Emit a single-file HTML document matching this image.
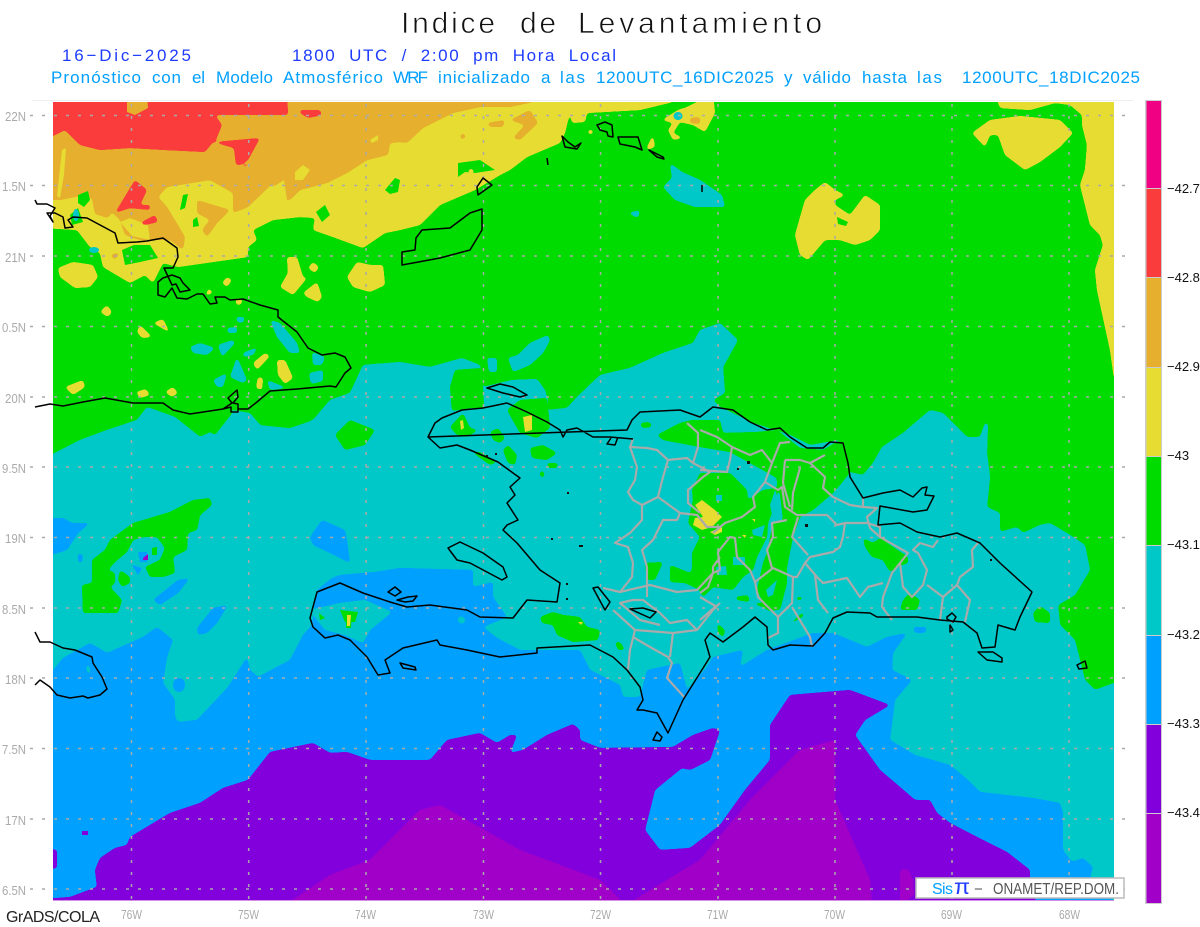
<!DOCTYPE html>
<html><head><meta charset="utf-8"><title>Indice de Levantamiento</title>
<style>html,body{margin:0;padding:0;background:#fff;width:1200px;height:927px;overflow:hidden}svg{display:block}text{font-family:"Liberation Sans",sans-serif}</style></head>
<body>
<svg width="1200" height="927" viewBox="0 0 1200 927" xmlns="http://www.w3.org/2000/svg">
<defs>
<filter id="g" x="-2%" y="-2%" width="104%" height="104%" color-interpolation-filters="sRGB">
<feGaussianBlur stdDeviation="1.6"/>
<feColorMatrix type="matrix" values="1 0 0 0 0 0 1 0 0 0 0 0 1 0 0 0 0 0 16 -7"/>
</filter>
<clipPath id="m"><rect x="53" y="102" width="1061" height="799"/></clipPath>
</defs>
<rect width="1200" height="927" fill="#fff"/>
<g clip-path="url(#m)">
<rect x="53" y="102" width="1061" height="799" fill="#00dc00"/>

<!-- yellow -->
<g fill="#e6dc32" filter="url(#g)">
<polygon points="45,94 673,94 673,102 640,110 587,113 585,122 572,123 570,112 565,133 560,143 527,157 510,170 500,175 475,190 440,205 420,225 400,230 385,233 363,248 333,237 313,230 315,218 300,217 273,220 253,230 257,240 248,247 248,257 178,267 163,263 153,283 145,275 130,283 103,267 100,253 90,247 77,230 45,228"/>
<polygon points="58,268 73,262 93,265 98,277 90,287 75,288 60,277"/>
<polygon points="287,257 297,257 303,277 307,278 293,295 280,287 288,273"/>
<polygon points="313,262 319,267 315,273 308,268"/>
<polygon points="303,293 317,282 322,297 318,302 307,297"/>
<polygon points="347,277 357,262 370,265 383,265 385,285 370,292 353,287"/>
<polygon points="107,305 112,312 108,317 100,312"/>
<polygon points="140,325 152,337 142,338 137,332"/>
<polygon points="153,323 163,319 170,333 162,328"/>
<polygon points="227,277 232,280 227,287 222,283"/>
<polygon points="209,288 213,293 205,296"/>
<polygon points="239,297 243,302 238,306 235,301"/>
<polygon points="65,387 83,380 85,387 73,395"/>
<polygon points="165,392 173,387 178,393 172,397"/>
<polygon points="136,392 146,389 150,395 140,398"/>
<polygon points="253,363 265,353 270,356 257,370"/>
<polygon points="277,360 285,360 293,378 285,384 278,375"/>
<polygon points="258,377 263,378 262,390 256,388"/>
<polygon points="972,133 990,120 1020,116 1060,120 1073,133 1060,147 1040,162 1025,170 1005,155 998,135 990,135 985,147"/>
<polygon points="825,182 835,190 845,195 835,200 835,205 850,215 865,195 880,205 880,230 870,240 855,245 840,240 825,240 808,260 800,255 795,235 805,200 815,190"/>
<polygon points="995,94 1000,108 1030,110 1055,103 1070,105 1082,115 1082,125 1087,145 1085,170 1080,185 1085,205 1090,225 1100,235 1103,245 1095,270 1097,290 1110,350 1114,378 1122,378 1122,94"/>
<polygon points="670,115 678,110 687,107 713,94 715,113 705,132 693,125 680,122 673,133 683,138 673,140 668,130 673,123 662,120"/>
<polygon points="647,147 653,135 655,147 647,150"/>
<polygon points="588,130 593,130 593,134 588,134"/>
</g>
<polygon points="837,217 848,222 846,226 838,224" fill="#00dc00"/>
<polygon points="458,163 480,160 495,170 475,173 465,172 458,177" fill="#00dc00"/>
<ellipse cx="471" cy="172" rx="2.500" ry="3" fill="#e6dc32"/>
<polygon points="673,94 690,94 685,108 675,107" fill="#00dc00"/>
<ellipse cx="678" cy="116" rx="4.500" ry="4" fill="#00c8c8"/>

<!-- orange -->
<g fill="#e6af2d" filter="url(#g)">
<polygon points="45,94 533,94 533,102 510,107 480,107 453,113 423,128 407,143 400,142 390,143 388,155 367,160 347,173 327,183 300,190 290,200 280,200 273,183 248,207 233,213 233,193 210,180 167,187 158,197 167,207 185,237 183,250 170,240 140,240 125,235 120,220 110,210 95,200 85,195 60,200 45,200"/>
<polygon points="197,200 230,210 217,223 207,237 202,230 210,220 197,213"/>
<polygon points="92,198 117,205 108,218 95,214"/>
<polygon points="487,123 505,120 503,127 490,127"/>
<polygon points="510,120 530,110 538,123 520,140 513,138 525,125"/>
<polygon points="690,118 700,117 700,124 690,123"/>
<polygon points="110,255 120,252 115,260"/>
<polygon points="460,135 465,133 465,139 461,139"/>
</g>
<g fill="#e6dc32">
<polygon points="62,150 66,148 64,175 60,198 57,196"/>
<polygon points="295,172 303,165 310,170 303,180 295,180"/>
<polygon points="370,140 378,135 378,140 372,143"/>
<polygon points="273,187 284,180 287,200 280,202"/>
<polygon points="120,222 130,218 148,225 150,240 132,236"/>
</g>

<!-- red -->
<g fill="#fa3c3c" filter="url(#g)">
<polygon points="45,94 287,94 288,115 215,115 222,125 215,142 260,138 248,160 240,165 236,165 234,148 213,142 205,152 165,150 130,148 100,150 80,145 65,130 45,140"/>
<polygon points="300,110 320,110 322,115 308,118 300,113"/>
<polygon points="243,165 255,162 243,168"/>
<polygon points="115,213 135,180 147,190 140,205 150,205 150,210 130,208"/>
<polygon points="140,223 155,215 158,222 145,225"/>
</g>
<polygon points="127,94 147,94 148,108 135,115 127,112" fill="#e6af2d"/>

<!-- green spots in upper-left -->
<g fill="#00dc00">
<polygon points="78,195 88,191 90,200 84,207 78,203"/>
<polygon points="70,215 78,208 83,222 72,225"/>
<polygon points="183,195 188,194 185,208 180,210"/>
<polygon points="193,220 197,217 199,226 193,227"/>
<polygon points="385,190 395,178 400,180 398,192 390,194"/>
<polygon points="316,212 325,205 330,215 322,222"/>
<polygon points="122,250 134,245 150,245 158,258 140,262 125,265"/>
</g>
<ellipse cx="94" cy="250" rx="5" ry="3" fill="#00c8c8"/>
<ellipse cx="76" cy="215" rx="3" ry="6" fill="#00c8c8"/>

<!-- teal -->
<g fill="#00c8c8" filter="url(#g)">
<polygon points="45,458 80,440 107,430 137,420 147,407 175,417 200,437 215,430 232,410 250,413 260,425 290,425 313,420 330,400 350,393 363,365 400,362 430,367 462,358 480,365 483,387 512,380 537,379 545,390 548,400 547,410 567,408 577,397 600,375 630,368 663,353 693,343 700,330 720,323 738,340 723,367 725,393 713,400 720,407 743,418 750,422 790,435 810,445 840,440 849,472 863,475 873,463 882,447 903,433 930,410 943,413 967,437 980,437 985,423 988,423 987,453 990,477 987,507 1000,513 1000,532 1017,527 1023,533 1040,525 1050,523 1070,535 1085,545 1090,570 1075,595 1058,605 1060,625 1075,640 1085,680 1095,690 1122,680 1122,909 45,909"/>
<polygon points="487,358 497,358 497,372 489,372"/>
<polygon points="508,358 518,355 530,343 548,335 550,340 543,353 530,365 513,372"/>
<polygon points="190,347 200,343 215,348 207,355 193,353"/>
<polygon points="218,345 233,340 235,343 222,357"/>
<polygon points="227,328 237,327 237,333 228,333"/>
<polygon points="236,317 245,317 243,323 237,322"/>
<polygon points="270,320 280,323 297,343 300,353 290,353 277,337"/>
<polygon points="230,377 237,357 247,380 243,383"/>
<polygon points="213,380 227,373 223,387 217,387"/>
<polygon points="243,353 258,347 253,355 243,357"/>
<polygon points="312,352 325,357 322,365 313,365"/>
<polygon points="309,373 323,370 323,381 311,384"/>
<polygon points="267,380 287,388 270,390"/>
<polygon points="670,163 682,172 700,180 722,195 725,207 695,207 675,200 663,187 672,178"/>
<polygon points="628,213 640,210 638,218"/>
</g>

<!-- green over teal -->
<g fill="#00dc00" filter="url(#g)">
<polygon points="253,413 280,405 310,410 313,420 290,428 260,425"/>
<polygon points="335,435 350,420 375,430 365,445 345,450"/>
<polygon points="205,408 225,398 233,412 215,435 198,425"/>
<polygon points="455,370 482,368 484,408 470,408 452,411 450,387"/>
<polygon points="507,410 520,400 547,398 548,408 550,428 537,438 520,433"/>
<polygon points="450,427 463,413 470,428 478,430 467,437 457,435"/>
<polygon points="490,432 498,428 505,438 500,443 493,440"/>
<polygon points="503,450 508,445 517,455 515,465 508,463"/>
<polygon points="530,448 543,445 557,453 547,460 532,458"/>
<polygon points="472,452 480,452 497,462 490,465"/>
<polygon points="547,463 558,463 557,468 548,468"/>
<polygon points="540,472 543,470 545,477 540,477"/>
<polygon points="83,613 82,585 92,583 92,560 105,550 110,540 133,523 150,518 170,512 193,500 210,498 212,505 200,515 197,530 188,533 187,550 177,555 173,557 175,573 163,577 150,577 145,567 160,560 165,548 157,537 143,537 133,540 127,552 115,562 108,570 115,573 115,583 110,587 122,600 118,613"/>
<polygon points="120,570 130,577 130,583 122,587 118,580"/>
<polygon points="1033,613 1040,606 1050,613 1050,623 1035,622"/>
<polygon points="640,423 650,422 652,427 642,428"/>
<polygon points="657,435 680,423 692,420 720,420 723,433 757,432 777,430 800,448 823,450 840,440 852,445 852,470 840,485 833,493 813,510 800,517 793,537 787,567 787,583 780,610 767,610 757,590 763,563 767,553 773,523 783,520 780,493 777,488 777,478 730,452 700,447 663,440"/>
<polygon points="692,490 700,473 730,473 747,490 748,500 763,490 777,488 777,500 768,523 767,537 757,557 753,570 743,577 733,590 713,587 703,597 690,573 692,570 692,553 700,537 688,523 693,500"/>
<polygon points="645,563 663,562 655,580 647,580"/>
<polygon points="670,565 690,573 707,580 700,590 685,583 670,582"/>
<polygon points="863,538 873,543 880,538 893,547 908,557 908,563 897,567 890,572 883,560 872,557 865,547"/>
<polygon points="903,600 910,593 920,600 917,610 900,610"/>
<polygon points="735,597 748,595 750,602 737,600"/>
<polygon points="750,603 770,603 773,613 763,607"/>
<polygon points="795,597 803,597 802,600 797,600"/>
<polygon points="790,623 802,613 805,615 793,623"/>
<polygon points="717,623 725,630 723,638 718,632"/>
<polygon points="540,617 553,612 563,615 580,617 587,627 600,630 598,640 573,642 557,635 553,625 542,623"/>
<polygon points="615,642 620,642 625,650 618,650"/>
</g>
<g fill="#00c8c8">
<polygon points="752,530 765,525 762,537 753,535"/>
<polygon points="733,557 745,557 745,565 733,565"/>
<polygon points="716,567 726,566 727,575 717,575"/>
<polygon points="775,490 781,505 773,520 770,505"/>
<polygon points="766,590 777,580 773,595 768,597"/>
<polygon points="716,495 722,495 722,501 716,501"/>
</g>
<g fill="#00a0ff">
<polygon points="138,552 147,552 147,562 140,562"/>
<polygon points="132,565 142,568 138,575"/>
</g>
<polygon points="143,558 148,554 148,560 143,560" fill="#a000c8"/>
<polygon points="152,548 157,547 157,555 152,555" fill="#00dc00"/>

<!-- yellow over green in DR -->
<g fill="#e6dc32">
<polygon points="695,505 702,500 715,510 722,517 712,527 702,530 693,525 695,518 703,517"/>
<polygon points="710,532 722,527 722,532 715,535"/>
<polygon points="523,417 532,415 532,430 525,432"/>
<polygon points="460,421 463,420 464,428 461,430"/>
<polygon points="578,622 583,622 581,625"/>
<polygon points="752,519 755,519 755,522"/>
<polygon points="742,535 746,535 745,538"/>
</g>

<!-- blue -->
<g filter="url(#g)" fill="#00a0ff">
<polygon points="45,680 63,658 90,643 107,653 143,637 157,627 173,640 167,657 163,683 175,700 175,717 178,722 197,720 228,687 247,657 250,670 258,677 290,660 303,635 312,625 315,600 317,590 332,578 340,575 375,572 400,568 473,570 473,587 493,582 493,597 507,617 495,622 483,627 497,638 520,650 580,650 590,670 620,685 623,697 640,697 647,670 680,663 687,690 707,667 713,657 743,650 740,667 767,650 813,633 833,633 867,647 887,637 907,633 893,653 892,670 912,680 895,700 890,740 915,755 950,765 968,780 980,792 1033,798 1060,803 1063,813 1063,850 1072,862 1083,858 1093,867 1090,877 1107,897 1122,905 1122,909 45,909"/>
<polygon points="45,518 63,518 72,523 90,523 78,533 67,550 45,557"/>
<polygon points="78,553 83,555 82,563 78,562"/>
<polygon points="153,600 178,580 190,578 178,593 160,605"/>
<polygon points="197,628 213,608 228,605 217,623 207,633 198,635"/>
<polygon points="310,537 322,520 345,530 347,540 350,563 330,553 313,545"/>
<polygon points="913,627 927,627 925,633 915,633"/>
</g>
<g fill="#00c8c8" filter="url(#g)">
<polygon points="309,610 340,603 365,600 392,612 370,630 363,643 345,635 325,630"/>
<polygon points="457,618 463,616 466,622 460,624"/>
<polygon points="86,665 89,665 91,675 87,672"/>
</g>
<ellipse cx="179" cy="685" rx="6" ry="7" fill="#00a0ff"/>
<polygon points="340,610 345,622 355,622 358,612" fill="#00dc00"/>
<polygon points="346,612 352,612 351,628 346,628" fill="#00dc00"/>
<polygon points="347,615 351,615 350,626 347,626" fill="#e6dc32"/>
<polygon points="319,613 325,618 320,620" fill="#00dc00"/>

<!-- purple -->
<g fill="#8200dc" filter="url(#g)">
<polygon points="57,898 70,897 97,887 95,870 100,858 115,848 127,845 130,837 170,813 200,803 223,788 248,780 270,752 313,743 330,753 347,752 370,760 430,760 447,740 480,733 497,743 510,735 517,735 510,753 523,750 547,735 573,724 580,730 580,740 600,748 673,747 693,735 713,728 720,730 710,760 690,770 682,768 655,790 645,830 660,850 690,848 720,825 745,790 770,760 770,725 790,695 850,690 890,705 865,720 855,735 880,770 900,787 915,800 930,800 937,813 950,823 983,840 1007,852 1030,870 1030,880 1038,909 45,909 45,899"/>
<polygon points="45,848 57,850 57,868 45,870"/>
</g>
<rect x="82" y="831" width="6" height="4" fill="#8200dc"/>
<g fill="#a000c8" filter="url(#g)">
<polygon points="285,905 330,875 370,860 420,810 440,805 520,850 600,880 626,905"/>
<polygon points="626,905 700,860 750,800 800,750 835,740 835,800 870,880 872,905"/>
<polygon points="900,870 908,869 913,880 914,895 900,905"/>
</g>
<rect x="53" y="900" width="1061" height="1" fill="#d68fe8"/>
</g>

<!-- grid -->
<g stroke="#aaaaaa" stroke-width="1.500" stroke-dasharray="3 9" fill="none">
<path d="M30 115.500H1133M30 185.500H1133M30 256H1133M30 326.500H1133M30 397H1133M30 467H1133M30 537.500H1133M30 608H1133M30 678H1133M30 748.500H1133M30 819H1133M30 889H1133"/>
<path d="M131.500 104V908M248.700 104V908M366 104V908M483.500 104V908M600.500 104V908M718 104V908M835 104V908M952 104V908M1069 104V908"/>
</g>
<path d="M32 100.500H1133" stroke="#eeeeee" stroke-width="1"/>

<!-- province lines -->
<g fill="none" stroke="#aaaaaa" stroke-width="2.200" stroke-linejoin="round">
<path d="M633 439L630 447 637 467 635 480 628 492 633 500 642 505 642 520 630 533 615 543 628 547 633 563 632 577 620 592 603 588M613 610L635 630 630 650 628 670"/>
<path d="M630 447L647 448 657 450 668 460 687 458 693 463 698 447 698 433 687 423"/>
<path d="M668 460L663 477 658 497 642 505"/>
<path d="M658 497L680 513 697 515 707 527 720 527"/>
<path d="M680 513L677 520 663 520 653 540 642 550 647 567 647 583 647 597"/>
<path d="M620 592L650 585 677 592 697 590 713 573 713 567 720 557"/>
<path d="M693 463L710 472 703 477 688 490 688 503 700 513"/>
<path d="M700 430L717 437 732 447 750 455 762 450 772 463 780 443 790 442"/>
<path d="M732 447L730 460 727 472 700 470"/>
<path d="M772 463L765 482 753 497 755 507 742 517 725 523 713 533"/>
<path d="M765 482L778 490 782 487 785 507 797 515 815 515 827 515 837 525 845 523 843 537"/>
<path d="M785 460L800 460 810 463 825 455M785 460L783 483 790 507"/>
<path d="M800 468L793 493 792 510"/>
<path d="M810 463L825 477 823 488 833 497 850 505 863 507 877 508 867 517 870 528 880 537 908 553 892 573 883 597 882 607 892 620"/>
<path d="M863 497L863 507M845 523L867 523 880 527 880 537"/>
<path d="M843 537L840 547 833 552 810 557 805 563 797 577 793 577 773 568 755 582 750 570 737 557 735 538 730 537 718 552 720 570 713 573 708 587 700 593"/>
<path d="M798 517L792 537 808 555"/>
<path d="M787 520L772 523 773 537 767 550 772 568"/>
<path d="M805 563L817 577 823 583 847 578 860 597 868 587 883 583"/>
<path d="M815 575L818 600 828 613"/>
<path d="M793 577L792 603 778 617 778 633 768 638"/>
<path d="M755 582L758 597 778 617"/>
<path d="M792 607L810 637 812 647"/>
<path d="M700 597L717 607M715 607L700 620"/>
<path d="M900 563L903 587 912 597 923 585 927 570 918 553 913 550 920 543 933 547 938 540"/>
<path d="M927 585L943 597 940 620M943 597L957 585 970 600 965 622M957 585L960 577 973 567 972 550 978 543"/>
<path d="M633 637L650 647 668 657 672 663 667 678 685 698M635 630L673 633 697 630 687 620 670 623 660 613 643 600 633 600 620 603 640 620 660 625"/>
<path d="M673 633L670 657M697 630L713 610 720 603"/>
</g>

<!-- coast -->
<g fill="none" stroke="#000" stroke-width="1.500" stroke-linejoin="round">
<path d="M35 407L50 404 63 406 83 402 105 398 133 403 163 403 173 410 190 414 223 409 232 403 228 398 237 390 238 397 233 403 238 404 238 412 231 412 231 407 223 409M238 409L248 409 257 402 270 391 297 389 330 386 336 387 345 373 351 368 345 357 335 353 322 355 308 348 297 332 278 317 278 310 260 305 243 299 230 300 225 297 215 297 217 303 210 304 203 294 197 294 187 299 177 298 172 288 165 297 158 295 158 282 163 278 172 275 180 278 183 283 190 290 180 292 176 284 172 285 164 268 173 268 178 257 177 248 163 238 147 241 137 242 118 243 115 233 87 218 73 217 68 220 73 227 65 228 63 217 55 213 47 213 53 222 50 216 55 208 47 204 37 204 35 200"/>
<path d="M402 265L402 252 415 250 416 238 422 230 450 228 470 213 482 209 482 230 470 250 440 258 402 265Z"/>
<path d="M477 187L483 178 492 185 478 195Z"/>
<path d="M562 136L565 147 577 149 581 143 575 147 568 142Z"/>
<path d="M597 125L605 122 612 125 613 137 608 136 607 132 600 130Z"/>
<path d="M618 137L638 137 642 150 635 147 620 144Z"/>
<path d="M649 150L663 157 664 159 657 157Z"/>
<path d="M547 158L548 165M702 185L702 192"/>
<path d="M428 437L435 423 442 418 462 410 483 408 507 403 527 412 547 422 560 430 563 437 567 430 577 428 593 437 610 437 633 439M611 438L607 444 615 445 618 437M627 430L632 420 640 412 660 411 680 410 700 417 713 407 733 410 750 422 767 430 780 428 790 437 807 448 823 448 830 442 843 443 848 463 850 477 863 498 883 493 900 490 913 497 922 488 927 487 925 495 934 496 927 510 913 512 880 506 878 525 900 523 917 532 940 537 957 533 980 543 1000 563 1032 592 1020 617 1015 630 998 625 995 647 982 648 977 633 963 622 940 620 917 617 877 617 870 613 847 612 833 618 825 633 813 646 790 645 773 650 768 645 767 627 755 617 743 627 723 642 710 633 705 640 710 657 683 700 668 733 657 713 643 710 637 710 643 700 640 687 627 670 613 657 590 645 537 648 537 653 500 657 467 650 440 645 437 640 403 648 385 660 390 673 378 675 367 657 350 640 338 635 325 638 313 627 310 618 317 592 340 583 363 593 390 602 407 607 430 605 467 610 480 617 513 618 527 600 557 602 560 583 540 570 517 543 503 530 507 525 518 520 507 503 515 495 510 487 520 478 513 473 498 462 470 450 457 445 440 448 428 437Z"/>
<path d="M448 548L460 542 483 553 503 567 507 577 502 580 470 563 457 560Z"/>
<path d="M487 388L500 384 513 387 527 395 520 397 503 393Z"/>
<path d="M388 592L395 587 401 592 395 596Z"/>
<path d="M397 600L408 597 417 596 413 601 405 602Z"/>
<path d="M400 663L415 667 416 670 403 668Z"/>
<path d="M593 588L598 587 610 602 605 610Z"/>
<path d="M630 609L643 608 656 612 650 618Z"/>
<path d="M653 740L657 732 662 737 660 741Z"/>
<path d="M978 652L993 652 1002 658 1002 662 987 660Z"/>
<path d="M947 617L952 613 956 617 953 622 947 619Z"/>
<path d="M950 625L953 630 950 632Z"/>
<path d="M35 632L40 642 50 642 63 648 75 650 92 657 93 663 102 677 107 689 100 695 88 698 83 696 70 698 57 695 50 687 40 680 35 685"/>
<path d="M1077 665L1085 661 1087 668 1079 669Z"/>
</g>
<g fill="#111">
<rect x="495" y="453" width="2" height="2"/><rect x="486" y="455" width="2" height="2"/><rect x="567" y="492" width="2" height="2"/><rect x="579" y="545" width="4" height="2"/><rect x="551" y="538" width="2" height="2"/><rect x="566" y="583" width="2" height="2"/><rect x="566" y="598" width="2" height="2"/><rect x="990" y="559" width="2" height="2"/><rect x="747" y="461" width="3" height="3"/><rect x="805" y="524" width="3" height="3"/><rect x="737" y="468" width="2" height="2"/>
</g>

<!-- colorbar -->
<rect x="1145" y="100" width="17" height="804" fill="#cccccc"/>
<rect x="1146.500" y="101" width="14.500" height="87" fill="#f00082"/>
<rect x="1146.500" y="189" width="14.500" height="88" fill="#fa3c3c"/>
<rect x="1146.500" y="278" width="14.500" height="89" fill="#e6af2d"/>
<rect x="1146.500" y="368" width="14.500" height="88" fill="#e6dc32"/>
<rect x="1146.500" y="457" width="14.500" height="88" fill="#00dc00"/>
<rect x="1146.500" y="546" width="14.500" height="89" fill="#00c8c8"/>
<rect x="1146.500" y="636" width="14.500" height="88" fill="#00a0ff"/>
<rect x="1146.500" y="725" width="14.500" height="88" fill="#8200dc"/>
<rect x="1146.500" y="814" width="14.500" height="89" fill="#a000c8"/>

<g font-size="13" fill="#111">
<text x="1167" y="193">−42.7</text><text x="1167" y="282">−42.8</text><text x="1167" y="371">−42.9</text><text x="1167" y="460">−43</text><text x="1167" y="549">−43.1</text><text x="1167" y="639">−43.2</text><text x="1167" y="728">−43.3</text><text x="1167" y="817">−43.4</text>
</g>

<g font-size="30" fill="#111" stroke="#fff" stroke-width="0.700">
<text x="401" y="33" textLength="94" lengthAdjust="spacing">Indice</text>
<text x="520" y="33" textLength="36" lengthAdjust="spacing">de</text>
<text x="578" y="33" textLength="244" lengthAdjust="spacing">Levantamiento</text>
</g>
<text x="62" y="61" font-size="17" fill="#1e3cff" textLength="129" lengthAdjust="spacing">16−Dic−2025</text>
<text x="292" y="61" font-size="17" fill="#1e3cff" textLength="324" lengthAdjust="spacing" xml:space="preserve">1800  UTC  /  2:00  pm  Hora  Local</text>
<g font-size="17" fill="#00a0ff">
<text x="51" y="83" textLength="90" lengthAdjust="spacing">Pronóstico</text>
<text x="152" y="83" textLength="29" lengthAdjust="spacing">con</text>
<text x="192" y="83" textLength="13" lengthAdjust="spacing">el</text>
<text x="216" y="83" textLength="57" lengthAdjust="spacing">Modelo</text>
<text x="283" y="83" textLength="100" lengthAdjust="spacing">Atmosférico</text>
<text x="393" y="83" textLength="35" lengthAdjust="spacing">WRF</text>
<text x="438" y="83" textLength="92" lengthAdjust="spacing">inicializado</text>
<text x="541" y="83" textLength="9" lengthAdjust="spacing">a</text>
<text x="560" y="83" textLength="25" lengthAdjust="spacing">las</text>
<text x="596" y="83" textLength="178" lengthAdjust="spacing">1200UTC_16DIC2025</text>
<text x="784" y="83" textLength="9" lengthAdjust="spacing">y</text>
<text x="803" y="83" textLength="48" lengthAdjust="spacing">válido</text>
<text x="862" y="83" textLength="45" lengthAdjust="spacing">hasta</text>
<text x="917" y="83" textLength="25" lengthAdjust="spacing">las</text>
<text x="962" y="83" textLength="178" lengthAdjust="spacing">1200UTC_18DIC2025</text>
</g>

<g font-size="13" fill="#aaaaaa">
<text x="5" y="121" textLength="21" lengthAdjust="spacingAndGlyphs">22N</text><text x="2" y="191" textLength="24" lengthAdjust="spacingAndGlyphs">1.5N</text><text x="5" y="262" textLength="21" lengthAdjust="spacingAndGlyphs">21N</text><text x="2" y="332" textLength="24" lengthAdjust="spacingAndGlyphs">0.5N</text><text x="5" y="403" textLength="21" lengthAdjust="spacingAndGlyphs">20N</text><text x="2" y="473" textLength="24" lengthAdjust="spacingAndGlyphs">9.5N</text><text x="5" y="543" textLength="21" lengthAdjust="spacingAndGlyphs">19N</text><text x="2" y="614" textLength="24" lengthAdjust="spacingAndGlyphs">8.5N</text><text x="5" y="684" textLength="21" lengthAdjust="spacingAndGlyphs">18N</text><text x="2" y="754" textLength="24" lengthAdjust="spacingAndGlyphs">7.5N</text><text x="5" y="825" textLength="21" lengthAdjust="spacingAndGlyphs">17N</text><text x="2" y="895" textLength="24" lengthAdjust="spacingAndGlyphs">6.5N</text>
<text x="121" y="919" textLength="21" lengthAdjust="spacingAndGlyphs">76W</text><text x="238" y="919" textLength="21" lengthAdjust="spacingAndGlyphs">75W</text><text x="355" y="919" textLength="21" lengthAdjust="spacingAndGlyphs">74W</text><text x="473" y="919" textLength="21" lengthAdjust="spacingAndGlyphs">73W</text><text x="590" y="919" textLength="21" lengthAdjust="spacingAndGlyphs">72W</text><text x="707" y="919" textLength="21" lengthAdjust="spacingAndGlyphs">71W</text><text x="824" y="919" textLength="21" lengthAdjust="spacingAndGlyphs">70W</text><text x="941" y="919" textLength="21" lengthAdjust="spacingAndGlyphs">69W</text><text x="1059" y="919" textLength="21" lengthAdjust="spacingAndGlyphs">68W</text>
</g>
<text x="6" y="922" font-size="16" fill="#222" textLength="94" lengthAdjust="spacing">GrADS/COLA</text>

<rect x="916" y="878" width="208" height="20" fill="#fff" stroke="#bbbbbb" stroke-width="1.500"/>
<text x="932" y="894" font-size="16" fill="#00a0ff" textLength="21" lengthAdjust="spacing">Sis</text>
<text x="954" y="894" font-size="21" fill="#1e3cff" textLength="16" lengthAdjust="spacingAndGlyphs">π</text>
<text x="974" y="894" font-size="15" fill="#555">−</text>
<text x="993" y="894" font-size="16" fill="#555" textLength="126" lengthAdjust="spacingAndGlyphs">ONAMET/REP.DOM.</text>
</svg>
</body></html>
